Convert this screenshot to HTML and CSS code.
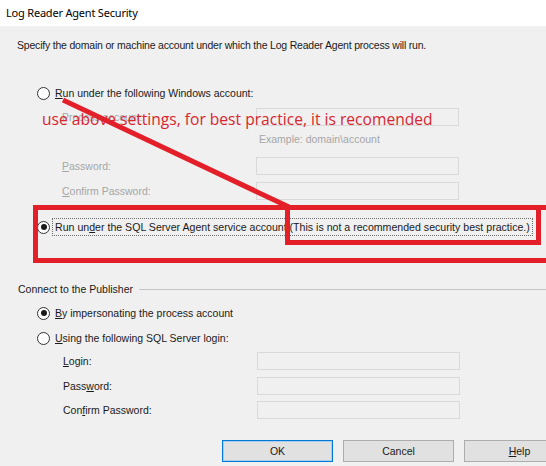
FILE: index.html
```html
<!DOCTYPE html>
<html>
<head>
<meta charset="utf-8">
<link rel="stylesheet" href="styles.css">
</head>
<body>
<div class="dialog">
  <div class="titlebar">Log Reader Agent Security</div>
  <div class="content">
    <div class="desc">Specify the domain or machine account under which the Log Reader Agent process will run.</div>

    <div class="radio-row r1"><span class="radio"></span><span class="rlabel"><u>R</u>un under the following Windows account:</span></div>
    <div class="field f1 disabled"><span class="flabel">Process account:</span><span class="input"></span></div>
    <div class="example">Example: domain\account</div>
    <div class="field f2 disabled"><span class="flabel"><u>P</u>assword:</span><span class="input"></span></div>
    <div class="field f3 disabled"><span class="flabel"><u>C</u>onfirm Password:</span><span class="input"></span></div>

    <div class="radio-row r2"><span class="radio checked"></span><span class="rlabel focus">Run un<u>d</u>er the SQL Server Agent service account (This is not a recommended security best practice.)</span></div>

    <div class="group"><span class="gtitle">Connect to the Publisher</span><span class="gline"></span></div>
    <div class="radio-row r3"><span class="radio checked"></span><span class="rlabel"><u>B</u>y impersonating the process account</span></div>
    <div class="radio-row r4"><span class="radio"></span><span class="rlabel"><u>U</u>sing the following SQL Server login:</span></div>
    <div class="field f4 lower"><span class="flabel"><u>L</u>ogin:</span><span class="input"></span></div>
    <div class="field f5 lower"><span class="flabel">Pass<u>w</u>ord:</span><span class="input"></span></div>
    <div class="field f6 lower"><span class="flabel">Con<u>f</u>irm Password:</span><span class="input"></span></div>

    <div class="buttons">
      <span class="btn default">OK</span>
      <span class="btn">Cancel</span>
      <span class="btn"><u>H</u>elp</span>
    </div>
  </div>

  <svg class="annot" width="546" height="466" viewBox="0 0 546 466">
    <line x1="63" y1="100" x2="289" y2="207" stroke="#e3202a" stroke-width="5"/>
    <rect x="35.5" y="207.5" width="530" height="53" fill="none" stroke="#e3202a" stroke-width="5"/>
    <rect x="287.5" y="207.5" width="251" height="35" fill="none" stroke="#e3202a" stroke-width="5"/>
  </svg>
  <div class="note">use above settings, for best practice, it is recomended</div>
</div>
</body>
</html>
```

FILE: styles.css
```css
html, body {
  margin: 0;
  padding: 0;
  width: 546px;
  height: 466px;
  overflow: hidden;
}
body {
  background: #f0f0f0;
  font-family: "Liberation Sans", Arial, sans-serif;
  font-size: 10.5px;
  color: #1a1a1a;
}
u { text-decoration: underline; text-underline-offset: 1px; }
.dialog {
  position: relative;
  width: 546px;
  height: 466px;
  overflow: hidden;
}
.titlebar {
  height: 26px;
  background: #ffffff;
  padding-left: 6px;
  font-family: "Noto Sans", "Open Sans", sans-serif;
  font-size: 11px;
  letter-spacing: -0.2px;
  line-height: 25px;
  color: #000;
}
.content {
  display: flex;
  flex-direction: column;
}
.desc {
  margin-top: 10px;
  height: 18px;
  line-height: 18px;
  padding-left: 17px;
  letter-spacing: -0.2px;
}
.radio-row {
  height: 18px;
  display: flex;
  align-items: center;
  padding-left: 37px;
}
.r1 { margin-top: 30px; }
.r2 { margin-top: 18px; }
.r3 { margin-top: 7px; }
.r4 { margin-top: 7px; }
.radio {
  width: 11px;
  height: 11px;
  border: 1px solid #333;
  border-radius: 50%;
  background: #fff;
  display: flex;
  align-items: center;
  justify-content: center;
  flex: none;
}
.radio.checked::after {
  content: "";
  width: 6px;
  height: 6px;
  border-radius: 50%;
  background: #1a1a1a;
}
.rlabel {
  margin-left: 5px;
  line-height: 16px;
  white-space: nowrap;
}
.rlabel.focus {
  margin-left: 2px;
  padding: 0 2px;
  border: 1px dotted #6d6d6d;
  font-size: 10.6px;
}
.field {
  height: 18px;
  display: grid;
  grid-template-columns: 194px 203px;
  align-items: center;
  padding-left: 62px;
}
.field.lower { padding-left: 63px; }
.f1 { margin-top: 6px; }
.f2 { margin-top: 10px; }
.f3 { margin-top: 7px; }
.f4 { margin-top: 5px; }
.f5 { margin-top: 7px; }
.f6 { margin-top: 6px; }
.field.disabled .flabel { color: #a6a6a6; }
.input {
  height: 18px;
  box-sizing: border-box;
  border: 1px solid #d9d9d9;
  background: #f0f0f0;
}
.example {
  margin-top: 5px;
  height: 16px;
  line-height: 16px;
  padding-left: 259px;
  color: #a6a6a6;
}
.group {
  margin-top: 45px;
  height: 16px;
  display: flex;
  align-items: center;
  padding-left: 18px;
}
.gtitle { white-space: nowrap; }
.gline {
  flex: 1;
  height: 1px;
  background: #c4c4c4;
  margin-left: 6px;
}
.buttons {
  margin-top: 21px;
  display: flex;
  gap: 10px;
  padding-left: 222px;
}
.btn {
  flex: none;
  width: 111px;
  height: 22px;
  box-sizing: border-box;
  border: 1px solid #adadad;
  background: #e1e1e1;
  display: flex;
  align-items: center;
  justify-content: center;
}
.btn.default {
  border: 1px solid #0078d7;
  box-shadow: inset 0 0 0 1px #a9cdee;
}
.annot {
  position: absolute;
  left: 0;
  top: 0;
  pointer-events: none;
}
.note {
  position: absolute;
  left: 42px;
  top: 108px;
  font-family: "Open Sans", "Noto Sans", sans-serif;
  font-size: 15.6px;
  line-height: 22px;
  color: #d9262e;
  white-space: nowrap;
}
```
